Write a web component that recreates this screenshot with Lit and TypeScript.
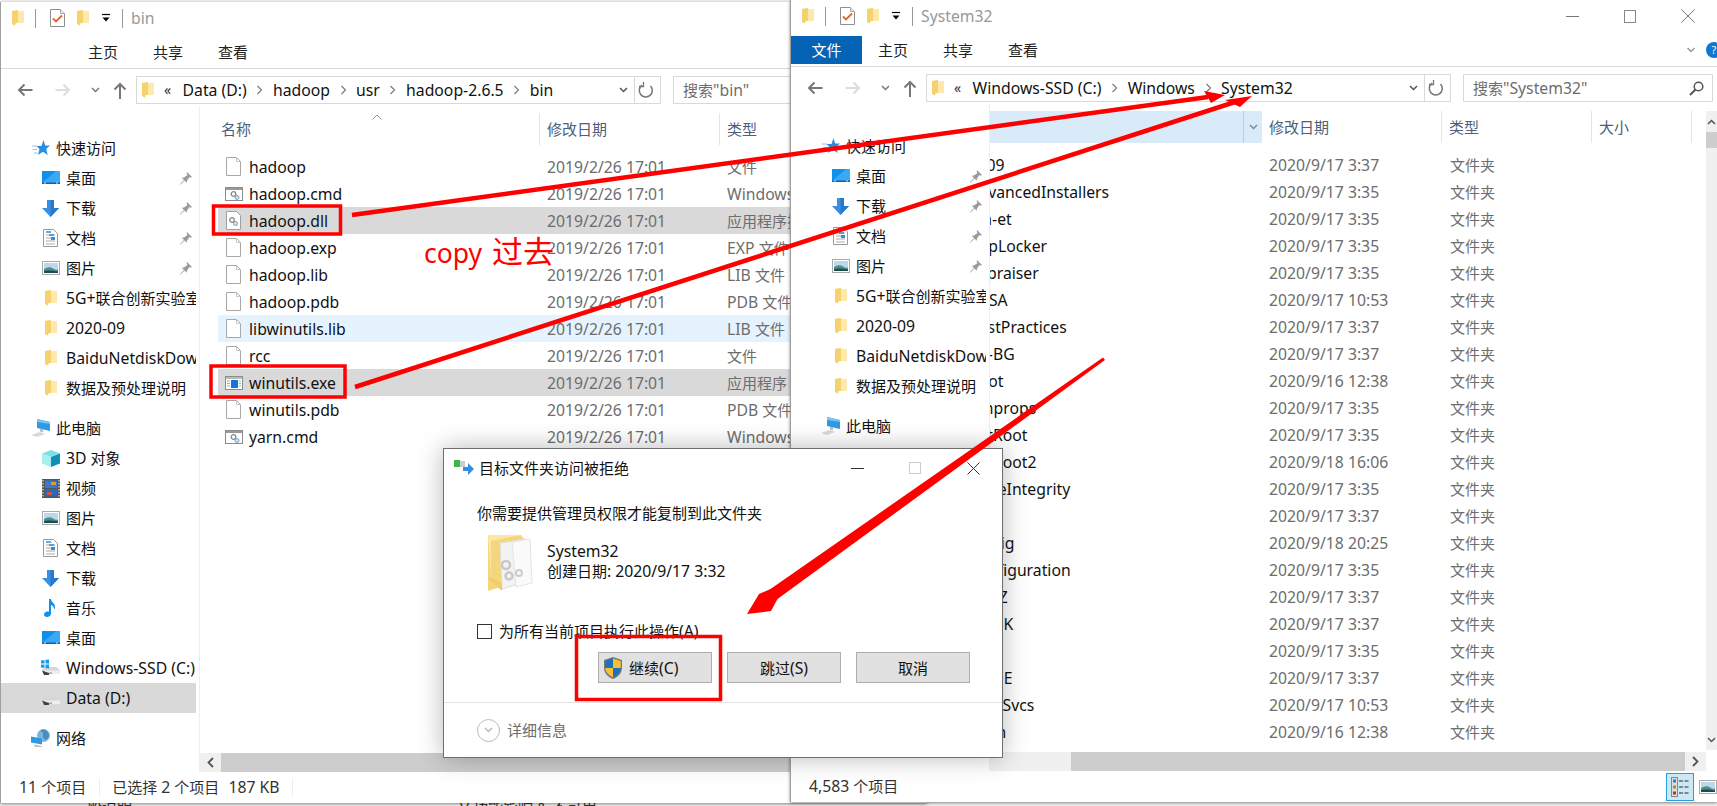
import { LitElement, html, svg, css } from "lit";
import { customElement } from "lit/decorators.js";

const mix = (t: string) => t.split(/([\x00-\x7f]+)/).filter(Boolean).map((p) => (/^[\x00-\x7f]+$/.test(p) ? html`<span class="lat">${p}</span>` : p));

const folder = (w = 12, h = 16) => html`<svg width=${w} height=${h} viewBox="0 0 12 16"><path d="M0 1 6 0v1h6v12H3.5L3 15.5 0 14z" fill="#fbe39a"/><path d="M0 1 6 0v13H3.5L3 15.5 0 14z" fill="#f5d16f"/><path d="M6 1h6v12H6z" fill="#fde9ab"/></svg>`;
const checkDoc = () => html`<svg width="15" height="18" viewBox="0 0 15 18"><path d="M.5.5h10l4 4v13H.5z" fill="#fff" stroke="#8f8f8f"/><path d="M10.500.5v4h4" fill="#eee" stroke="#aaa"/><path d="M3 9.500 6 12.500 12 6.500" fill="none" stroke="#e8602c" stroke-width="1.800"/></svg>`;
const qdrop = () => html`<svg width="10" height="10" viewBox="0 0 10 10"><path d="M1 1.500h8" stroke="#000" stroke-width="1.200"/><path d="M1.500 4.500h7L5 8.500z" fill="#000"/></svg>`;
const navArrow = (c: string, flip = false) => html`<svg width="16" height="14" viewBox="0 0 16 14" class=${flip ? "flip" : ""}><path d="M15.500 7H2M7.500 1.500 2 7l5.500 5.500" fill="none" stroke=${c} stroke-width="2"/></svg>`;
const upArrow = () => html`<svg width="14" height="17" viewBox="0 0 14 17"><path d="M7 17V2M1.500 7.500 7 2l5.500 5.500" fill="none" stroke="#777" stroke-width="2"/></svg>`;
const chevD = (c = "#777", w = 9) => html`<svg width=${w} height="6" viewBox="0 0 9 6"><path d="M1 1l3.500 3.500L8 1" fill="none" stroke=${c} stroke-width="1.500"/></svg>`;
const chevR = () => html`<svg width="7" height="10" viewBox="0 0 7 10"><path d="M1.500 1l4 4-4 4" fill="none" stroke="#777" stroke-width="1.100"/></svg>`;
const refresh = () => html`<svg width="16" height="18" viewBox="0 0 16 18"><path d="M12.500 5A6.500 6.500 0 1 1 4 4.200" fill="none" stroke="#777" stroke-width="1.500"/><path d="M4.500 1v4.500H0" fill="none" stroke="#777" stroke-width="1.300" transform="translate(1 0)"/></svg>`;
const mag = () => html`<svg width="15" height="15" viewBox="0 0 15 15"><circle cx="9.500" cy="5.500" r="4.300" fill="none" stroke="#555" stroke-width="1.500"/><path d="M6.500 8.500 1 14" stroke="#555" stroke-width="2"/></svg>`;
const star = () => html`<svg width="18" height="17" viewBox="0 0 18 17"><path d="M11.500 0l1.700 5.500H18l-3.800 3.400 1.500 6L11 11.800 6 15l1.500-6L4.500 6h5z" fill="#2b8de0"/><path d="M0 6h5M1 9.500h4M2 13h3.500" stroke="#8cc6f2" stroke-width="1.200"/></svg>`;
const desktop = () => html`<svg width="18" height="14" viewBox="0 0 18 14"><rect width="18" height="13" fill="#0f90ec"/><path d="M0 12 14 0h4v13H0z" fill="#38a9f2"/><path d="M0 11.500h18V13H0z" fill="#0a62b8"/><path d="M2 12h2M14 12h2" stroke="#cfe8fb"/></svg>`;
const dl = () => html`<svg width="17" height="17" viewBox="0 0 17 17"><path d="M5 0h7v8h5l-8.500 9L0 8h5z" fill="#3b8fe2"/><path d="M8.500 0H12v8h5l-8.500 9z" fill="#2a78cc"/></svg>`;
const docs = () => html`<svg width="15" height="18" viewBox="0 0 15 18"><path d="M.5.500h10l4 4v13H.5z" fill="#fff" stroke="#999"/><path d="M3 6h9M3 9h9M3 12h9M3 15h9" stroke="#aaa"/><path d="M3 3h5M6 6h5" stroke="#2f8fe0" stroke-width="1.400"/><rect x="8" y="8" width="4" height="3" fill="#2f8fe0"/></svg>`;
const pic = () => html`<svg width="18" height="14" viewBox="0 0 18 14"><rect x=".5" y=".5" width="17" height="13" fill="#fff" stroke="#aaa"/><rect x="2" y="2" width="14" height="10" fill="#bcd8ee"/><path d="M2 8q5-3 9-.5t5 .5v4H2z" fill="#4d8d85"/><path d="M2 10q6-1 14 .5V12H2z" fill="#1f4a52"/></svg>`;
const pc = () => html`<svg width="20" height="18" viewBox="0 0 20 18"><path d="M6 0l13 3v9L6 9z" fill="#2e9ae6"/><path d="M6 0l13 3v2L6 3z" fill="#7ac4f2"/><path d="M0 16l9-3 5 2-8 3z" fill="#d8d8d8"/><path d="M9 9.500l3 .7v3l-3-.7z" fill="#bbb"/></svg>`;
const cube = () => html`<svg width="18" height="17" viewBox="0 0 18 17"><path d="M9 0l9 3.500L9 7 0 3.500z" fill="#7de0e8"/><path d="M0 3.500 9 7v10L0 13.500z" fill="#a8eeee"/><path d="M18 3.500 9 7v10l9-3.500z" fill="#0e8fb8"/></svg>`;
const film = () => html`<svg width="18" height="19" viewBox="0 0 18 19"><rect width="18" height="19" fill="#555"/><path d="M1 1v17M17 1v17" stroke="#ddd" stroke-width="1.200" stroke-dasharray="1.500 1.500"/><rect x="3" y="1.500" width="12" height="7.500" fill="#3a78d0"/><rect x="3" y="10" width="12" height="7.500" fill="#2a68c0"/><rect x="9" y="3" width="5" height="3" fill="#d8a030"/><rect x="5" y="13" width="5" height="3" fill="#d85030"/></svg>`;
const note = () => html`<svg width="18" height="18" viewBox="0 0 18 18"><path d="M7 0h2c0 3 4 4 4 8 0 1-.5 2-1 2.500.3-2.500-1.500-4-3-4.500v8.500C9 16.500 7 18 5 18s-3-1-3-2.500S3.500 12.500 5.500 12.500c.5 0 1 .1 1.500.3z" fill="#0f90ec"/></svg>`;
const drive = (win = false) => html`<svg width="20" height="18" viewBox="0 0 20 18"><path d="M1 11l4-3h10l4 3-1 4H2z" fill="#d6d6d6"/><path d="M1 11.500h18V15H2z" fill="#eee"/><path d="M1 11.500 8 14v2H3z" fill="#444"/><rect x="8" y="13.500" width="3" height="1.200" fill="#4ac060"/>${win ? svg`<path d="M0 1.500l3.500-.5V4.500H0zM4.500 .8 8 .5v4H4.500zM0 5.500h3.500V9L0 8.500zM4.500 5.500H8v4l-3.500-.5z" fill="#10a0f0"/>` : ""}</svg>`;
const globe = () => html`<svg width="20" height="18" viewBox="0 0 20 18"><circle cx="12.500" cy="6.500" r="6.500" fill="#7db4dc"/><path d="M9 2q4 1 3 4t3 5q3-2 3-5-1-5-6-5.500z" fill="#4a8cc0"/><path d="M0 7.500l11 2v6l-11-2z" fill="#2e9ae6"/><path d="M3 15.500l7 1.500 2 1H4z" fill="#bbb"/></svg>`;
const pin = () => html`<svg width="12" height="13" viewBox="0 0 12 13"><path d="M7 0l5 5-1.200.700L9.500 5 7 8.500l-.3 2.200L4.500 8.500 1 12l-1 1 .5-1.500L4 8 1.800 5.800 4 5.500 7.500 3l-.8-1.500z" fill="#9a9a9a"/></svg>`;
const blank = () => html`<svg width="15" height="19" viewBox="0 0 15 19"><path d="M.5.5h10l4 4v14H.5z" fill="#fff" stroke="#a8a8a8"/><path d="M10.500.5v4h4" fill="none" stroke="#c8c8c8"/></svg>`;
const gears = (x: number, y: number) => svg`<g transform="translate(${x} ${y})"><circle cx="3.500" cy="3.500" r="2.300" fill="none" stroke="#888" stroke-width="1.300"/><circle cx="7" cy="7" r="2" fill="#cfe2f2" stroke="#7f9fb8"/></g>`;
const cmdI = () => html`<svg width="18" height="14" viewBox="0 0 18 14"><rect x=".5" y=".5" width="17" height="13" fill="#fff" stroke="#8c8c8c"/><rect x="1" y="1" width="16" height="2" fill="#999"/>${gears(5, 3.500)}</svg>`;
const dllI = () => html`<svg width="15" height="19" viewBox="0 0 15 19"><path d="M.5.5h10l4 4v14H.5z" fill="#fff" stroke="#a0a0a0"/>${gears(2.500, 5.500)}</svg>`;
const exeI = () => html`<svg width="18" height="14" viewBox="0 0 18 14"><rect x=".5" y=".5" width="17" height="13" fill="#fff" stroke="#8c8c8c"/><rect x="1" y="1" width="16" height="2" fill="#bbb"/><rect x="6" y="4" width="7" height="8" fill="#0f78d8"/><path d="M2 5h3M2 7.500h3M2 10h3M14 5h2M14 7.500h2M14 10h2" stroke="#88b0d8"/></svg>`;
const shield = () => html`<svg width="18" height="22" viewBox="0 0 18 22"><path d="M9 0l9 3v8c0 5-4 9-9 11-5-2-9-6-9-11V3z" fill="#777"/><path d="M9 1.500V11H1.200V4zM9 11h7.800c-.3 4-3.500 7.200-7.800 9.300z" fill="#1f6fc4"/><path d="M9 1.500 16.800 4v7H9zM9 11v9.300C4.700 18.200 1.500 15 1.200 11z" fill="#f4c230"/></svg>`;
const xferIcon = () => html`<svg width="20" height="16" viewBox="0 0 20 16"><path d="M0 0h6v7H0z" fill="#3db54a"/><path d="M6 1h5v6H6z" fill="#ccc"/><path d="M9 7h5V3l6 6-6 6v-4H9z" fill="#2f8fe0"/></svg>`;
const bigFolder = () => html`<svg width="44" height="58" viewBox="0 0 44 58"><path d="M0 0h33l3 4v40L0 56z" fill="#f6d67c"/><path d="M0 0h33L3 6v38z" fill="#fbe6a4"/><path d="M12 8 38 4l2 42-26 8z" fill="#f3f3f3" stroke="#ddd"/><path d="M24 7l18-3 2 44-16 4z" fill="#fafafa" stroke="#e4e4e4"/><circle cx="18" cy="30" r="4" fill="none" stroke="#c8c8c8" stroke-width="2.500"/><circle cx="21" cy="41" r="3.500" fill="none" stroke="#c8c8c8" stroke-width="2.500"/><circle cx="31" cy="38" r="3" fill="none" stroke="#ccc" stroke-width="2"/><path d="M0 44l14 12 0-8-12-6z" fill="#f2cd6a"/></svg>`;
const listIcon = () => html`<svg width="18" height="20" viewBox="0 0 18 20"><rect x=".5" y=".5" width="6" height="19" fill="#ddd" stroke="#888"/><rect x="2" y="2.500" width="3" height="3" fill="#3a78c8"/><rect x="2" y="8.500" width="3" height="3" fill="#a89030"/><rect x="2" y="14.500" width="3" height="3" fill="#c03020"/><path d="M8 4h10M8 10h10M8 16h10" stroke="#666" stroke-width="1.400" stroke-dasharray="4 1.500"/></svg>`;

type Nav = [any, string, boolean?];
const quick: Nav[] = [[desktop, "桌面", true], [dl, "下载", true], [docs, "文档", true], [pic, "图片", true], [folder, "5G+联合创新实验室"], [folder, "2020-09"], [folder, "BaiduNetdiskDownload"], [folder, "数据及预处理说明"]];
const thisPc: Nav[] = [[cube, "3D 对象"], [film, "视频"], [pic, "图片"], [docs, "文档"], [dl, "下载"], [note, "音乐"], [desktop, "桌面"], [() => drive(true), "Windows-SSD (C:)"], [() => drive(false), "Data (D:)"]];

const D = "2019/2/26 17:01";
const leftFiles: [any, string, string, string][] = [
  [blank, "hadoop", "文件", ""], [cmdI, "hadoop.cmd", "Windows 命令脚本", ""], [dllI, "hadoop.dll", "应用程序扩展", "sel"],
  [blank, "hadoop.exp", "EXP 文件", ""], [blank, "hadoop.lib", "LIB 文件", ""], [blank, "hadoop.pdb", "PDB 文件", ""],
  [blank, "libwinutils.lib", "LIB 文件", "hov"], [blank, "rcc", "文件", ""], [exeI, "winutils.exe", "应用程序", "sel"],
  [blank, "winutils.pdb", "PDB 文件", ""], [cmdI, "yarn.cmd", "Windows 命令脚本", ""],
];
const sysRows: [string, string][] = [
  ["0409", "9/17 3:37"], ["AdvancedInstallers", "9/17 3:35"], ["am-et", "9/17 3:35"], ["AppLocker", "9/17 3:35"], ["appraiser", "9/17 3:35"],
  ["ar-SA", "9/17 10:53"], ["BestPractices", "9/17 3:37"], ["bg-BG", "9/17 3:37"], ["Boot", "9/16 12:38"], ["bthprops", "9/17 3:35"],
  ["CatRoot", "9/17 3:35"], ["CatRoot2", "9/18 16:06"], ["CodeIntegrity", "9/17 3:35"], ["com", "9/17 3:37"], ["config", "9/18 20:25"],
  ["Configuration", "9/17 3:35"], ["cs-CZ", "9/17 3:37"], ["da-DK", "9/17 3:37"], ["dns", "9/17 3:35"], ["de-DE", "9/17 3:37"],
  ["DiagSvcs", "9/17 10:53"], ["Dism", "9/16 12:38"],
];

@customElement("app-root")
export class AppRoot extends LitElement {
  static styles = css`
    :host { display: block; position: relative; width: 1717px; height: 806px; overflow: hidden; background: #f0f0f0;
      font: 15px/20px "Noto Sans", "Noto Sans CJK SC", sans-serif; color: #111; }
    svg { display: block; flex: none; overflow: visible; }
    .flip { transform: scaleX(-1); }
    .lat { font-size: 15.75px; }
    .behind { position: absolute; top: 797px; white-space: nowrap; color: #333; }
    .b1 { left: 72px; } .b2 { left: 460px; }
    .win { position: absolute; width: 927px; background: #fff; display: flex; flex-direction: column; box-sizing: border-box;
      border-left: 1px solid #a0a0a0; box-shadow: 0 1px 3px rgba(0,0,0,.45); overflow: hidden; }
    .left { left: 0; top: 2px; height: 801px; }
    .right { left: 790px; top: 0; height: 802px; }
    .title { height: 35px; flex: none; display: flex; align-items: center; color: #999; box-sizing: border-box; padding-bottom: 3px; }
    .qat { display: flex; align-items: center; margin-left: 11px; }
    .vsep { width: 1px; height: 19px; background: #999; margin: 0 14px 0 11px; }
    .vsep2 { margin: 0 8px 0 11px; }
    .gap { width: 12px; } .gap2 { width: 12px; }
    .ctrls { margin-left: auto; display: flex; align-items: center; }
    .ctrls span { width: 58px; display: flex; justify-content: center; }
    .tabs { height: 32px; flex: none; display: flex; align-items: center; border-bottom: 1px solid #d9d9d9; box-sizing: border-box; padding-bottom: 2px; }
    .file { width: 71px; height: 28px; margin-right: -1px; color: #fff; background: #0563b5; display: flex; align-items: center; justify-content: center; }
    .nofile { width: 70px; }
    .tab { margin-left: 17px; width: 30px; margin-right: 18px; white-space: nowrap; color: #222; }
    .tabRight { margin-left: auto; display: flex; align-items: center; gap: 9px; margin-right: -5px; }
    .help { width: 16px; height: 16px; border-radius: 50%; background: #0f78d0; color: #fff; font-size: 11px; line-height: 16px; text-align: center; }
    .bar { height: 28px; flex: none; display: flex; align-items: center; margin-top: 7px; }
    .navbtns { width: 135px; flex: none; display: flex; align-items: center; padding-left: 16px; box-sizing: border-box; }
    .navbtns .f { margin-left: 22px; } .navbtns .d { margin-left: 20px; } .navbtns .u { margin-left: 13px; }
    .addr { width: 525px; height: 28px; box-sizing: border-box; border: 1px solid #d9d9d9; display: flex; align-items: center; padding-left: 5px; flex: none; }
    .crumbs { flex: 1; display: flex; align-items: center; gap: 9.600px; white-space: nowrap; color: #111; overflow: hidden; margin-left: 10px; font-size: 15.75px; }
    .dbl { width: 9px; font-size: 14px; color: #333; }
    .addr .adrop { margin-right: 6px; }
    .addr .div { width: 1px; height: 26px; background: #d9d9d9; }
    .addr .ref { padding: 0 6px 0 3px; }
    .search { width: 250px; height: 28px; box-sizing: border-box; border: 1px solid #d9d9d9; margin-left: 12px; flex: none; display: flex; align-items: center; padding: 0 8px 0 9px; color: #6d6d6d; justify-content: space-between; white-space: nowrap; }
    .main { flex: 1; min-height: 0; display: flex; margin-top: 2px; }
    .nav { width: 199px; flex: none; box-sizing: border-box; border-right: 1px solid #eee; padding-top: 27px; overflow: hidden; }
    .nrow { height: 30px; display: flex; align-items: center; width: 195px; box-sizing: border-box; white-space: nowrap; overflow: hidden; }
    .sub { padding-left: 40px; } .top { padding-left: 30px; }
    .nrow .ic { width: 19px; margin-right: 6px; display: flex; justify-content: center; flex: none; }
    .nrow .tx { flex: 1; overflow: hidden; }
    .nrow.cur { background: #d9d9d9; }
    .pinned { margin-right: 4px; }
    .g10 { margin-top: 10px; }
    .pane { flex: 1; min-width: 0; display: flex; }
    .paneCol { flex: 1; min-width: 0; display: flex; flex-direction: column; padding-top: 7px; }
    .head { height: 32px; flex: none; display: flex; color: #4c607a; position: relative; white-space: nowrap; }
    .hc { box-sizing: border-box; padding-left: 7px; border-right: 1px solid #e5e5e5; display: flex; align-items: center; flex: none; }
    .hname { padding-left: 21px; width: 340px; }
    .w180 { width: 180px; } .w200 { width: 200px; border: 0; } .w150 { width: 150px; } .w100 { width: 100px; }
    .hl { background: #d9ebf9; border-right: 0; justify-content: flex-end; padding: 0; width: 272px; }
    .hl span { width: 19px; height: 100%; border-left: 1px solid #b8cfe2; display: flex; align-items: center; justify-content: center; box-sizing: border-box; }
    .caret { position: absolute; left: 172px; top: 1px; }
    .rows { flex: 1; min-height: 0; padding-top: 8px; overflow: hidden; }
    .row { height: 27px; display: flex; align-items: center; white-space: nowrap; }
    .left .row { margin-left: 18px; }
    .row.sel { background: #d9d9d9; } .row.hov { background: #e5f3ff; }
    .cell { flex: none; box-sizing: border-box; overflow: hidden; }
    .n { display: flex; align-items: center; color: #111; font-size: 15.75px; }
    .left .n { width: 321px; padding-left: 6px; }
    .right .n { width: 272px; }
    .n .fi { width: 19px; display: flex; justify-content: center; margin-right: 6px; }
    .right .n span { margin-left: -21.500px; }
    .dt { color: #6d6d6d; padding-left: 8px; font-size: 15.75px; }
    .left .dt { width: 188px; } .right .dt { width: 188px; padding-left: 7px; }
    .ty { color: #6d6d6d; }
    .hs { height: 19px; flex: none; display: flex; background: #f0f0f0; align-items: stretch; }
    .ha { width: 21px; flex: none; display: flex; align-items: center; justify-content: center; }
    .hthumb { flex: 1; background: #cdcdcd; }
    .hgapR { width: 60px; flex: none; }
    .vs { width: 11px; flex: none; background: #f0f0f0; margin: 7px 0 21px; display: flex; flex-direction: column; align-items: center; overflow: hidden; }
    .vt { align-self: stretch; height: 16px; background: #cdcdcd; }
    .va { height: 21px; display: flex; align-items: center; justify-content: center; }
    .vend { margin-top: auto; }
    .status { height: 31px; flex: none; display: flex; align-items: center; color: #333; white-space: nowrap; padding: 0 0 2px 18px; box-sizing: border-box; }
    .ssep { width: 1px; height: 18px; background: #eee; }
    .s1 { margin: 0 12px 0 13px; } .s2 { margin-left: 13px; } .kb { margin-left: 9px; }
    .views { margin-left: auto; display: flex; align-items: center; margin-top: 2px; }
    .vcur { width: 28px; height: 28px; box-sizing: border-box; border: 1px solid #26a0da; background: #cbe8f6; display: flex; align-items: center; justify-content: center; margin-right: 5px; }
    .dialog { position: absolute; left: 443px; top: 448px; width: 560px; height: 310px; box-sizing: border-box; background: #fff; border: 1px solid #6f6f6f; box-shadow: 0 0 24px rgba(0,0,0,.28); display: flex; flex-direction: column; }
    .dt-bar { height: 38px; flex: none; display: flex; align-items: center; padding-left: 10px; color: #111; }
    .dt-bar .txt { margin-left: 5px; }
    .dbody { padding-left: 33px; flex: 1; display: flex; flex-direction: column; }
    .msg { margin-top: 16px; }
    .info { display: flex; margin-top: 12px; height: 55px; padding-left: 11px; gap: 15px; }
    .info .lines { margin-top: 6px; }
    .chk { display: flex; align-items: center; margin-top: 31px; gap: 7px; height: 20px; }
    .box { width: 15px; height: 15px; box-sizing: border-box; border: 1.500px solid #333; }
    .btns { display: flex; justify-content: flex-end; gap: 15px; margin-top: 11px; padding-right: 32px; }
    .btn { width: 114px; height: 31px; box-sizing: border-box; background: #e1e1e1; border: 1px solid #adadad; display: flex; align-items: center; justify-content: center; gap: 7px; }
    .btn.shielded { justify-content: flex-start; padding-left: 5px; }
    .dfoot { height: 54px; flex: none; border-top: 1px solid #e3e3e3; display: flex; align-items: center; padding-left: 33px; gap: 7px; color: #6d6d6d; }
    .circ { width: 23px; height: 23px; box-sizing: border-box; border: 1px solid #bbb; border-radius: 50%; display: flex; align-items: center; justify-content: center; }
    .overlay { position: absolute; inset: 0; pointer-events: none; }
    .copy { position: absolute; left: 424px; top: 234px; font-size: 26.500px; line-height: 34px; color: #f00; white-space: nowrap; }
    .copy span { font-size: 31px; margin-left: 3px; }
  `;

  private nrow(n: Nav, cls: string, cur = false) {
    return html`<div class="nrow ${cls} ${cur ? "cur" : ""}"><span class="ic">${n[0]()}</span><span class="tx">${mix(n[1])}</span>${n[2] ? html`<span class="pinned">${pin()}</span>` : ""}</div>`;
  }

  private nav() {
    return html`<div class="nav">
      ${this.nrow([star, "快速访问"], "top")}
      ${quick.map((n) => this.nrow(n, "sub"))}
      <div class="g10">${this.nrow([pc, "此电脑"], "top")}</div>
      ${thisPc.map((n) => this.nrow(n, "sub", n[1] === "Data (D:)"))}
      <div class="g10">${this.nrow([globe, "网络"], "top")}</div>
    </div>`;
  }

  private chrome(titleText: string, crumbs: string[], tail: string, active: boolean, searchText: string) {
    return html`
      <div class="title">
        <div class="qat">${folder()}<span class="vsep"></span>${checkDoc()}<span class="gap"></span>${folder()}<span class="gap2"></span>${qdrop()}<span class="vsep vsep2"></span></div>
        <span class="lat">${titleText}</span>
        ${active ? html`<div class="ctrls"><span><svg width="13" height="1"><rect width="13" height="1" fill="#777"/></svg></span><span><svg width="12" height="13" viewBox="0 0 12 13"><rect x=".5" y=".5" width="11" height="12" fill="none" stroke="#888"/></svg></span><span><svg width="14" height="14" viewBox="0 0 14 14"><path d="M.5.5l13 13M13.500.5l-13 13" stroke="#777"/></svg></span></div>` : ""}
      </div>
      <div class="tabs">
        ${active ? html`<div class="file">文件</div>` : html`<div class="nofile"></div>`}
        <span class="tab">主页</span><span class="tab">共享</span><span class="tab">查看</span>
        ${active ? html`<div class="tabRight">${chevD("#999", 12)}<span class="help">?</span></div>` : ""}
      </div>
      <div class="bar">
        <div class="navbtns"><span>${navArrow("#777")}</span><span class="f">${navArrow("#ddd", true)}</span><span class="d">${chevD()}</span><span class="u">${upArrow()}</span></div>
        <div class="addr">
          ${folder()}
          <div class="crumbs"><span class="dbl">«</span>
            ${crumbs.map((c, i) => html`${i ? chevR() : ""}<span>${c}</span>`)}
          </div>
          <span class="adrop">${chevD("#555")}</span><span class="div"></span><span class="ref">${refresh()}</span>
        </div>
        <div class="search"><span>${mix(searchText)}</span>${tail === "mag" ? mag() : ""}</div>
      </div>`;
  }

  render() {
    return html`
      <div class="behind b1">一般说明</div>
      <div class="behind b2">V 功能影响 &amp; 不可用</div>

      <div class="win left">
        ${this.chrome("bin", ["Data (D:)", "hadoop", "usr", "hadoop-2.6.5", "bin"], "", false, '搜索"bin"')}
        <div class="main">
          ${this.nav()}
          <div class="pane"><div class="paneCol">
            <div class="head">
              <span class="caret"><svg width="10" height="6" viewBox="0 0 10 6"><path d="M.5 5.500 5 1l4.500 4.500" fill="none" stroke="#999"/></svg></span>
              <span class="hc hname">名称</span><span class="hc w180">修改日期</span><span class="hc w200">类型</span>
            </div>
            <div class="rows">
              ${leftFiles.map((f) => html`<div class="row ${f[3]}"><div class="cell n"><span class="fi">${f[0]()}</span>${f[1]}</div><div class="cell dt">${D}</div><div class="cell ty">${mix(f[2])}</div></div>`)}
            </div>
            <div class="hs"><span class="ha"><svg width="7" height="11" viewBox="0 0 7 11"><path d="M6 1 1.500 5.500 6 10" fill="none" stroke="#555" stroke-width="1.800"/></svg></span><span class="hthumb"></span></div>
          </div></div>
        </div>
        <div class="status"><span>${mix("11 个项目")}</span><span class="ssep s1"></span><span>${mix("已选择 2 个项目")}</span><span class="lat kb">187 KB</span><span class="ssep s2"></span></div>
      </div>

      <div class="win right">
        ${this.chrome("System32", ["Windows-SSD (C:)", "Windows", "System32"], "mag", true, '搜索"System32"')}
        <div class="main">
          ${this.nav()}
          <div class="pane"><div class="paneCol">
            <div class="head">
              <span class="hc hl"><span>${chevD("#7a8a9a")}</span></span><span class="hc w180">修改日期</span><span class="hc w150">类型</span><span class="hc w100">大小</span>
            </div>
            <div class="rows">
              ${sysRows.map((r) => html`<div class="row"><div class="cell n"><span>${r[0]}</span></div><div class="cell dt">2020/${r[1]}</div><div class="cell ty">文件夹</div></div>`)}
            </div>
            <div class="hs"><span class="ha"></span><span class="hgapR"></span><span class="hthumb"></span><span class="ha"><svg width="7" height="11" viewBox="0 0 7 11"><path d="M1 1l4.500 4.500L1 10" fill="none" stroke="#555" stroke-width="1.800"/></svg></span></div>
          </div>
          <div class="vs"><span class="va"><svg width="9" height="6" viewBox="0 0 9 6"><path d="M1 5l3.500-3.500L8 5" fill="none" stroke="#555" stroke-width="1.500"/></svg></span><span class="vt"></span><span class="va vend">${chevD("#555")}</span></div>
          </div>
        </div>
        <div class="status"><span>${mix("4,583 个项目")}</span><div class="views"><span class="vcur">${listIcon()}</span>${pic()}</div></div>
      </div>

      <div class="dialog">
        <div class="dt-bar">${xferIcon()}<span class="txt">目标文件夹访问被拒绝</span>
          <div class="ctrls"><span><svg width="13" height="1"><rect width="13" height="1" fill="#333"/></svg></span><span><svg width="12" height="12" viewBox="0 0 12 12"><rect x=".5" y=".5" width="11" height="11" fill="none" stroke="#ccc"/></svg></span><span><svg width="13" height="13" viewBox="0 0 13 13"><path d="M.5.5l12 12M12.500.5l-12 12" stroke="#333"/></svg></span></div>
        </div>
        <div class="dbody">
          <div class="msg">你需要提供管理员权限才能复制到此文件夹</div>
          <div class="info">${bigFolder()}<div class="lines"><div>${mix("System32")}</div><div>${mix("创建日期: 2020/9/17 3:32")}</div></div></div>
          <div class="chk"><span class="box"></span><span>${mix("为所有当前项目执行此操作(A)")}</span></div>
          <div class="btns"><div class="btn shielded">${shield()}<span>${mix("继续(C)")}</span></div><div class="btn"><span>${mix("跳过(S)")}</span></div><div class="btn">取消</div></div>
        </div>
        <div class="dfoot"><span class="circ">${chevD("#bbb", 11)}</span>详细信息</div>
      </div>

      <svg class="overlay" width="1717" height="806" viewBox="0 0 1717 806">
        <rect x="213.500" y="206" width="127" height="28" fill="none" stroke="#f00" stroke-width="3.500"/>
        <rect x="211" y="366" width="134" height="31" fill="none" stroke="#f00" stroke-width="3.500"/>
        <rect x="576.500" y="636.500" width="144" height="63" fill="none" stroke="#f00" stroke-width="3.500"/>
        <path d="M352 215 1208 97" stroke="#f00" stroke-width="4.500"/>
        <path d="M1225 95 1204 91 1211 103z" fill="#f00"/>
        <path d="M355 387 1235 102" stroke="#f00" stroke-width="4.500"/>
        <path d="M1252 96 1225 100 1240 107z" fill="#f00"/>
        <path d="M1103 357.500 1105 360 777.500 599 771 611 747 614 759 594 770.500 589z" fill="#f00"/>
      </svg>
      <div class="copy">copy <span>过去</span></div>
    `;
  }
}
